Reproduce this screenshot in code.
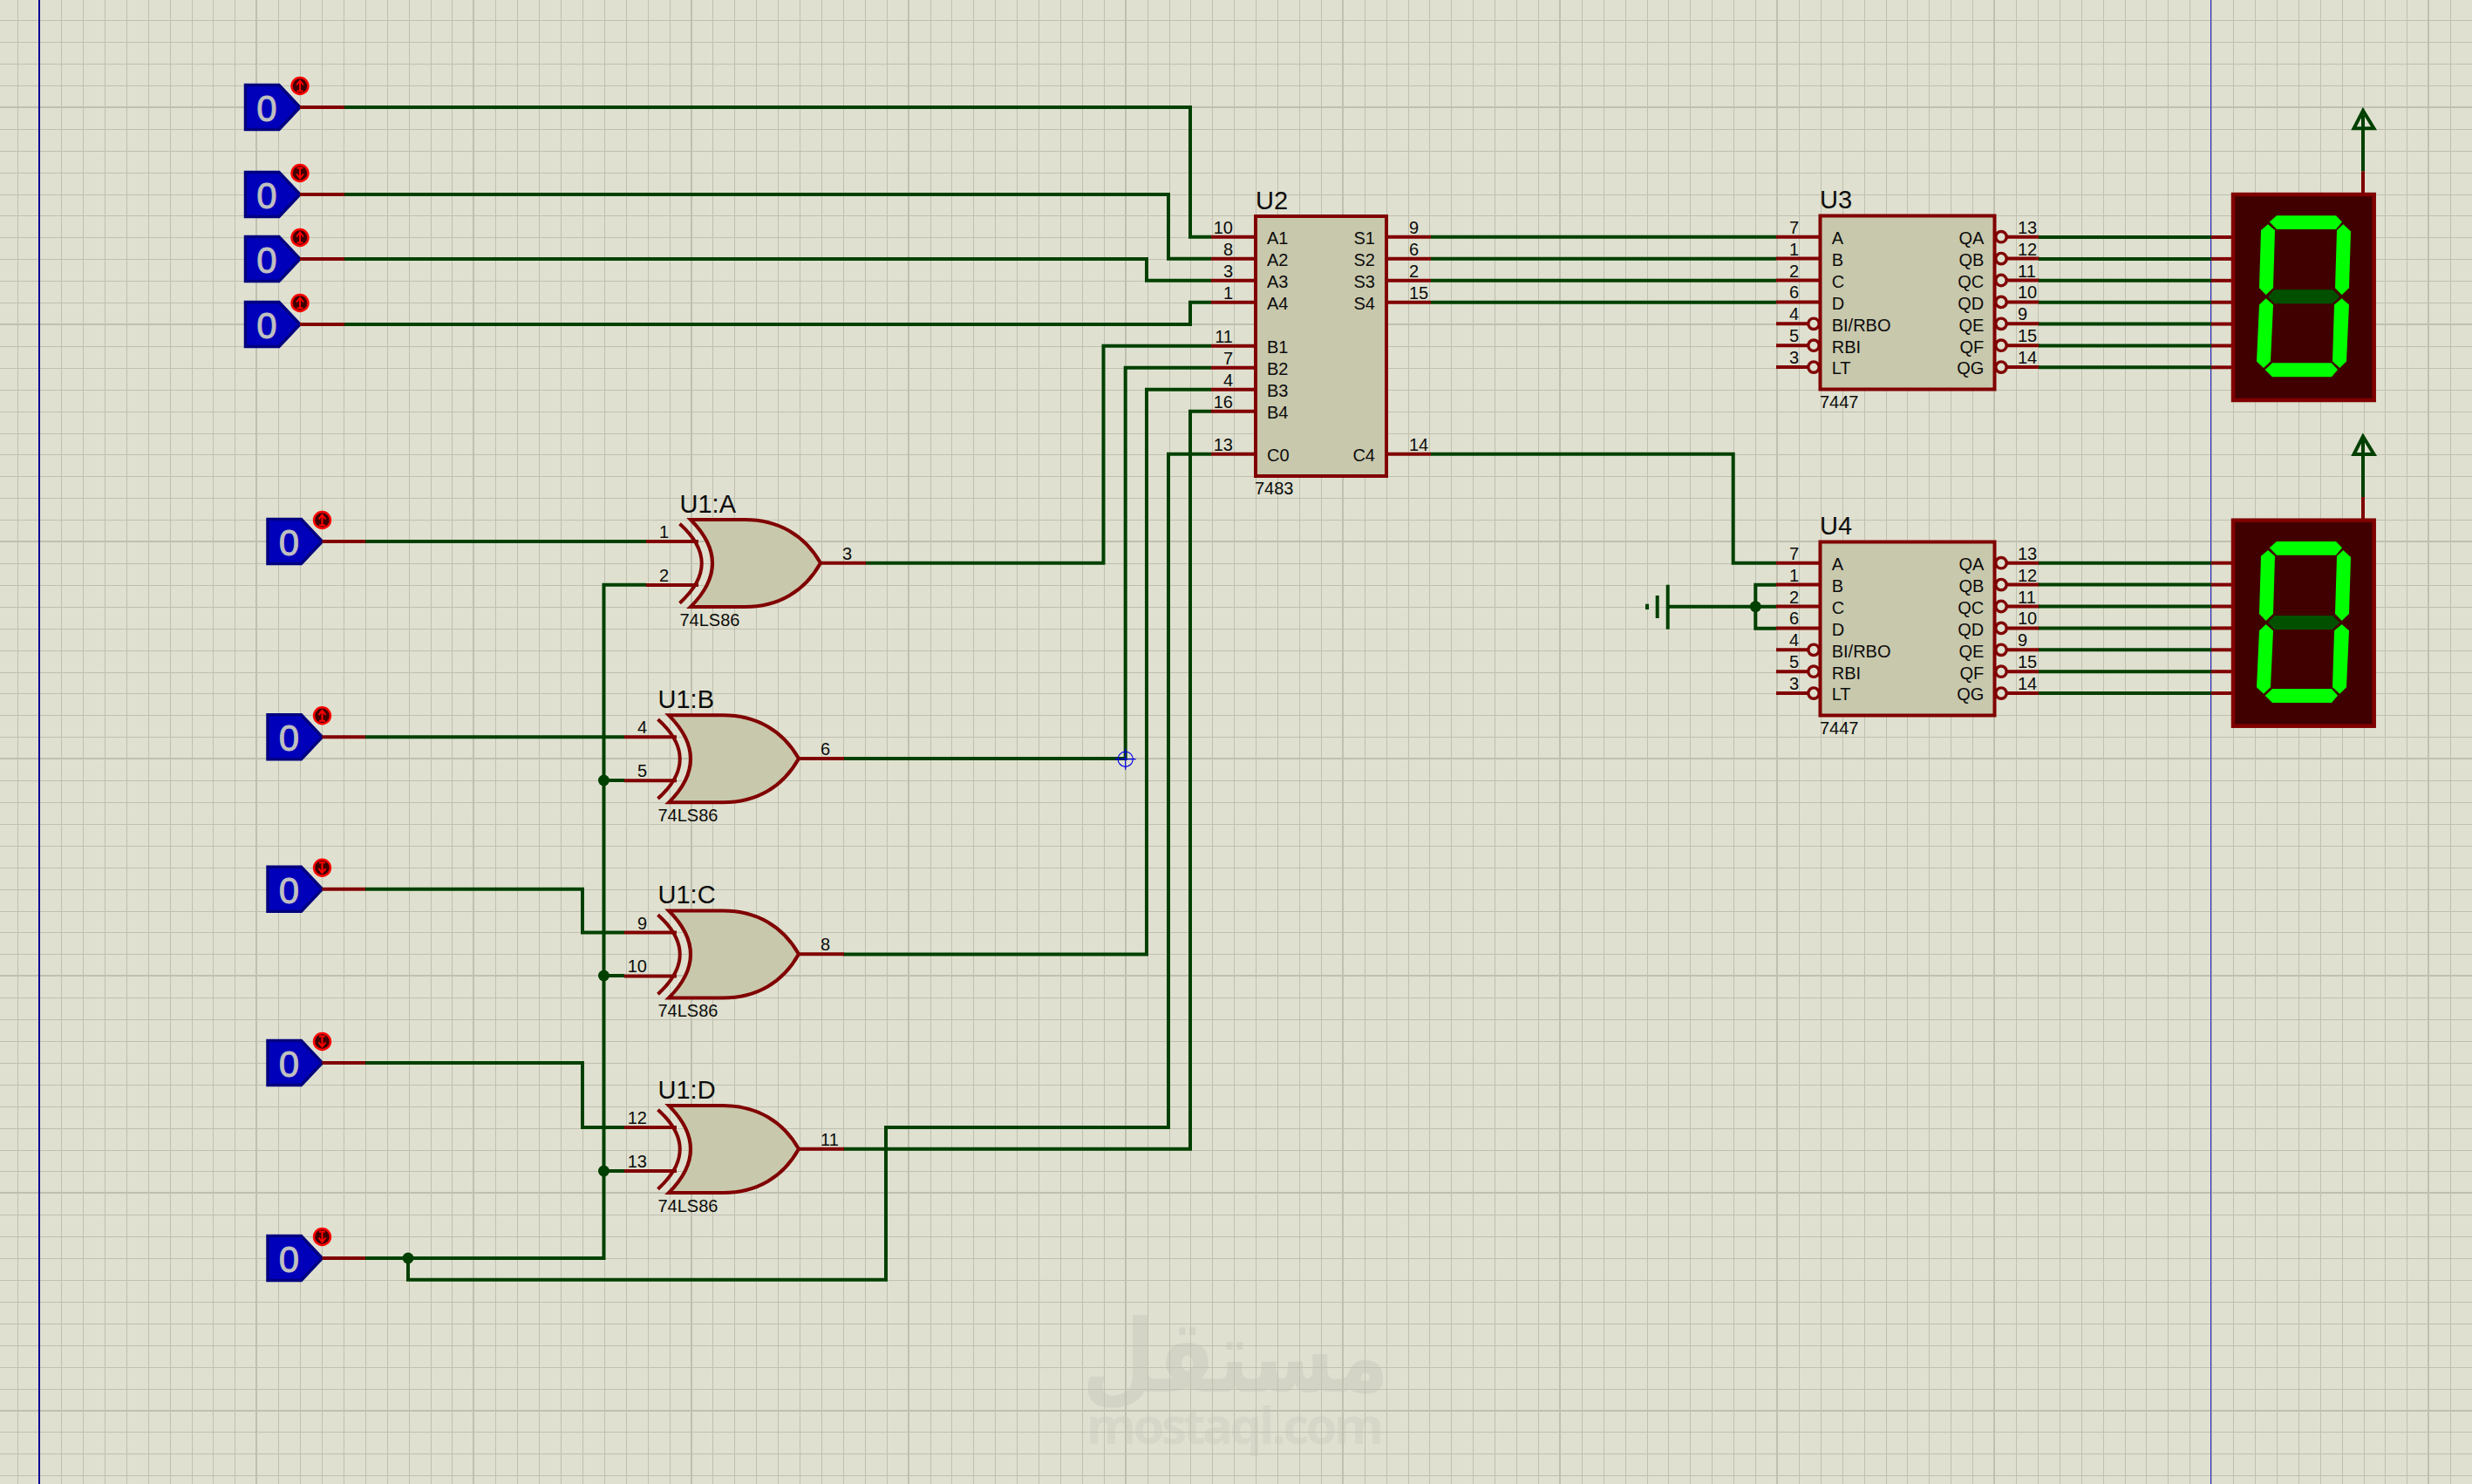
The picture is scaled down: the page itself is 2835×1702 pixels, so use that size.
import React from 'react';

const W = 2835;
const H = 1702;
const PITCH = 24.91;

const RED = '#800000';
const GREEN = '#004000';
const BODY = '#c8c8ac';

// grid of the schematic sheet, blue sheet border falls on a major line
const gridX = Array.from({ length: 116 }, (_, i) => i - 2);
const gridY = Array.from({ length: 72 }, (_, i) => i - 4);

const Wire: React.FC<{ d: string }> = ({ d }) => (
  <path d={d} fill="none" stroke={GREEN} strokeWidth={4} strokeLinejoin="miter" />
);

const Pin: React.FC<{ x1: number; x2: number; y: number }> = ({ x1, x2, y }) => (
  <line x1={x1} x2={x2} y1={y} y2={y} stroke={RED} strokeWidth={4} />
);

const Dot: React.FC<{ x: number; y: number }> = ({ x, y }) => <circle cx={x} cy={y} r={6.5} fill={GREEN} />;

const Label: React.FC<{ x: number; y: number; size?: number; end?: boolean; children: React.ReactNode }> = ({
  x,
  y,
  size = 20,
  end,
  children
}) => (
  <text x={x} y={y} fontSize={size} textAnchor={end ? 'end' : 'start'} fill="#0c0c0c">
    {children}
  </text>
);

// logic state input: blue tag with its little probe marker
const Terminal: React.FC<{ x: number; y: number; down?: boolean; stem?: number }> = ({ x, y, down, stem = 395 }) => (
  <g>
    <polygon
      points={`${x - 62.5},${y - 25.5} ${x - 24},${y - 25.5} ${x},${y} ${x - 24},${y + 25.5} ${x - 62.5},${y + 25.5}`}
      fill="#0000bb"
      stroke="#000080"
      strokeWidth={3.5}
    />
    <text x={x - 38} y={y + 16} fontSize={42} textAnchor="middle" fill="#c0c0c0" stroke="#c0c0c0" strokeWidth={0.9}>
      0
    </text>
    <Pin x1={x} x2={stem} y={y} />
    <circle cx={x} cy={y - 24.5} r={9.5} fill="#400000" stroke="#ff0000" strokeWidth={2.4} />
    <g transform={`translate(${x} ${y - 24.5}) scale(1 ${down ? -1 : 1})`}>
      <path d="M0 -5V6M-4 -1L0 -6L4 -1M-3.5 6H3.5" fill="none" stroke="#ff0000" strokeWidth={2} />
    </g>
  </g>
);

const XorGate: React.FC<{
  dx: number;
  dy: number;
  name: string;
  a: string;
  b: string;
  out: string;
  pinX: number;
}> = ({ dx, dy, name, a, b, out, pinX }) => {
  const numX = 767 + dx;
  return (
    <g>
      <Pin x1={pinX} x2={801 + dx} y={621 + dy} />
      <Pin x1={pinX} x2={801 + dx} y={671 + dy} />
      <Pin x1={941 + dx} x2={993 + dx} y={645.7 + dy} />
      <g transform={`translate(${dx} ${dy})`}>
        <path
          d="M792 596L854 596C893 596 923 614 941 645.7C923 678 893 696 854 696L792 696Q842 646 792 596Z"
          fill={BODY}
          stroke={RED}
          strokeWidth={4}
        />
        <path d="M779.5 600.7Q830 646 779.5 691.7" fill="none" stroke={RED} strokeWidth={4} />
      </g>
      <Label x={779.5 + dx} y={587.7 + dy} size={29}>
        {name}
      </Label>
      <Label x={779.5 + dx} y={717.7 + dy}>
        74LS86
      </Label>
      <Label x={numX} y={617 + dy} end>
        {a}
      </Label>
      <Label x={numX} y={666.7 + dy} end>
        {b}
      </Label>
      <Label x={966 + dx} y={641.7 + dy}>
        {out}
      </Label>
    </g>
  );
};

const U2_LEFT: [string, string, number][] = [
  ['A1', '10', 271.7],
  ['A2', '8', 296.7],
  ['A3', '3', 321.7],
  ['A4', '1', 346.7],
  ['B1', '11', 396.7],
  ['B2', '7', 421.7],
  ['B3', '4', 446.7],
  ['B4', '16', 471.7],
  ['C0', '13', 520.7]
];

const U2_RIGHT: [string, string, number][] = [
  ['S1', '9', 271.7],
  ['S2', '6', 296.7],
  ['S3', '2', 321.7],
  ['S4', '15', 346.7],
  ['C4', '14', 520.7]
];

const Adder: React.FC = () => (
  <g>
    {U2_LEFT.map(([name, num, y]) => (
      <g key={name}>
        <Pin x1={1389} x2={1440} y={y} />
        <Label x={1414} y={y - 4} end>
          {num}
        </Label>
      </g>
    ))}
    {U2_RIGHT.map(([name, num, y]) => (
      <g key={name}>
        <Pin x1={1590} x2={1641} y={y} />
        <Label x={1616} y={y - 4}>
          {num}
        </Label>
      </g>
    ))}
    <rect x={1440} y={248} width={150} height={298} fill={BODY} stroke={RED} strokeWidth={4} />
    {U2_LEFT.map(([name, , y]) => (
      <Label key={name} x={1453} y={y + 8.3}>
        {name}
      </Label>
    ))}
    {U2_RIGHT.map(([name, , y]) => (
      <Label key={name} x={1577} y={y + 8.3} end>
        {name}
      </Label>
    ))}
    <Label x={1440} y={239.5} size={29}>
      U2
    </Label>
    <Label x={1439} y={566.7}>
      7483
    </Label>
  </g>
);

const DEC_LEFT: [string, string][] = [
  ['A', '7'],
  ['B', '1'],
  ['C', '2'],
  ['D', '6'],
  ['BI/RBO', '4'],
  ['RBI', '5'],
  ['LT', '3']
];

const DEC_RIGHT: [string, string][] = [
  ['QA', '13'],
  ['QB', '12'],
  ['QC', '11'],
  ['QD', '10'],
  ['QE', '9'],
  ['QF', '15'],
  ['QG', '14']
];

const Decoder: React.FC<{ dy: number; name: string }> = ({ dy, name }) => (
  <g>
    {DEC_LEFT.map(([, num], i) => {
      const y = 271.7 + i * 24.9 + dy;
      return (
        <g key={num}>
          <Pin x1={2037} x2={i > 3 ? 2073 : 2088} y={y} />
          <Label x={2063} y={y - 4} end>
            {num}
          </Label>
        </g>
      );
    })}
    {DEC_RIGHT.map(([, num], i) => {
      const y = 271.7 + i * 24.9 + dy;
      return (
        <g key={num}>
          <Pin x1={2302} x2={2338.5} y={y} />
          <Label x={2314} y={y - 4}>
            {num}
          </Label>
        </g>
      );
    })}
    <rect x={2087.5} y={247.5 + dy} width={200} height={199} fill={BODY} stroke={RED} strokeWidth={4} />
    {DEC_LEFT.map(([label], i) => {
      const y = 271.7 + i * 24.9 + dy;
      return (
        <g key={label}>
          {i > 3 && <circle cx={2080} cy={y} r={6.2} fill="#dfe0cf" stroke={RED} strokeWidth={3.4} />}
          <Label x={2100.7} y={y + 8.3}>
            {label}
          </Label>
        </g>
      );
    })}
    {DEC_RIGHT.map(([label], i) => {
      const y = 271.7 + i * 24.9 + dy;
      return (
        <g key={label}>
          <circle cx={2295} cy={y} r={6.2} fill="#dfe0cf" stroke={RED} strokeWidth={3.4} />
          <Label x={2275.3} y={y + 8.3} end>
            {label}
          </Label>
        </g>
      );
    })}
    <Label x={2087} y={239 + dy} size={29}>
      {name}
    </Label>
    <Label x={2087} y={468 + dy}>
      7447
    </Label>
  </g>
);

// segment outlines, measured from the lower display
const SEG_ON = [
  '2602.7,628.3 2611,621 2679,621 2686,628.3 2679,636.7 2611,636.7',
  '2601,631 2609,637.7 2607,704 2598.7,712 2591,704 2593,637.7',
  '2687.3,631 2696,639 2694,704 2685.7,712 2678,704 2680,637.7',
  '2598.7,716 2607,723.3 2604,788.3 2596,795.7 2588,788.3 2591,723.3',
  '2685.7,716 2694,723.3 2691,788.3 2683.3,795.7 2675,788.3 2677,723.3',
  '2597.7,797.7 2606,790 2674,790 2681,797.7 2674,806 2606,806'
];

const Display: React.FC<{ dy: number }> = ({ dy }) => (
  <g transform={`translate(0 ${dy})`}>
    {[645.7, 670.6, 695.5, 720.4, 745.3, 770.2, 795].map(y => (
      <g key={y}>
        <line x1={2338} x2={2536} y1={y} y2={y} stroke={GREEN} strokeWidth={4} />
        <line x1={2536} x2={2561} y1={y} y2={y} stroke={RED} strokeWidth={4} />
      </g>
    ))}
    <rect x={2561} y={596.7} width={161.7} height={236} fill="#400000" stroke={RED} strokeWidth={4.5} />
    {SEG_ON.map(points => (
      <polygon key={points} points={points} fill="#00ff00" />
    ))}
    <polygon points="2601,714 2608.3,706 2675,706 2683.3,714 2675,722 2608.3,722" fill="#005000" />
    <line x1={2710} x2={2710} y1={596} y2={570} stroke={RED} strokeWidth={4} />
    <line x1={2710} x2={2710} y1={570} y2={505} stroke={GREEN} strokeWidth={4} />
    <polygon points="2710,500.5 2699.5,521 2722.5,521" fill="none" stroke={GREEN} strokeWidth={4} />
  </g>
);

export default function App() {
  return (
    <div className="relative w-[2835px] h-[1702px] overflow-hidden bg-[#dfe0cf] font-['Liberation_Sans',Arial,sans-serif]">
      <svg width={W} height={H} viewBox={`0 0 ${W} ${H}`} className="block">
        {/* watermark sits under the sheet grid */}
        <text
          transform="translate(1417 1596) scale(0.83 1)"
          fontSize={116}
          fontWeight={700}
          textAnchor="middle"
          direction="rtl"
          fill="#d3d4c6"
          className="font-['DejaVu_Sans',sans-serif]"
        >
          مستقل
        </text>
        <text
          x={1246}
          y={1656}
          fontSize={58}
          fontWeight={700}
          textLength={341}
          lengthAdjust="spacing"
          fill="#d6d7c8"
          className="font-['Open_Sans',sans-serif]"
        >
          mostaql.com
        </text>

        <g shapeRendering="crispEdges" fill="#bfc0af">
          {gridX.map(k => (
            <rect
              key={k}
              x={Math.round(45.2 + k * PITCH) - (k % 10 === 0 ? 1 : 0)}
              y={0}
              width={k % 10 === 0 ? 2 : 1}
              height={H}
            />
          ))}
          {gridY.map(k => (
            <rect
              key={k}
              x={0}
              y={Math.round(122.9 + k * PITCH) - (k % 10 === 0 ? 1 : 0)}
              width={W}
              height={k % 10 === 0 ? 2 : 1}
            />
          ))}
        </g>

        {/* sheet border */}
        <rect x={44} y={0} width={2} height={H} fill="#000090" shapeRendering="crispEdges" />
        <rect x={2535} y={0} width={1} height={H} fill="#2020c8" shapeRendering="crispEdges" />

        {/* input wires */}
        <Wire d="M395 123H1365V271.7H1389" />
        <Wire d="M395 223H1340V296.7H1389" />
        <Wire d="M395 297H1315V321.7H1389" />
        <Wire d="M395 372H1365V346.7H1389" />
        <Wire d="M419 621H741" />
        <Wire d="M419 845.3H716" />
        <Wire d="M419 1019.7H668V1069.5H716" />
        <Wire d="M419 1219H668V1293H716" />
        <Wire d="M741 670.7H692.5V1443H419" />
        <Wire d="M692.5 895H716" />
        <Wire d="M692.5 1119H716" />
        <Wire d="M692.5 1343H716" />

        {/* gate outputs into the adder */}
        <Wire d="M993 645.7H1265.5V396.7H1389" />
        <Wire d="M967 870H1290.7V421.7H1389" />
        <Wire d="M967 1094.5H1315V446.7H1389" />
        <Wire d="M967 1317.7H1365V471.7H1389" />
        <Wire d="M1389 520.7H1340V1293H1016V1467.7H468V1443" />

        {/* adder to decoders */}
        <Wire d="M1641 271.7H2037" />
        <Wire d="M1641 296.7H2037" />
        <Wire d="M1641 321.7H2037" />
        <Wire d="M1641 346.7H2037" />
        <Wire d="M1641 520.7H1987.7V645.7H2037" />

        {/* ground */}
        <Wire d="M1912.7 695.7H2037" />
        <Wire d="M2037 670.7H2013.3V720.7H2037" />
        <Wire d="M1912.7 670.7V721.7" />
        <Wire d="M1900.7 683V709" />
        <Wire d="M1889 692.7V699" />
        <Dot x={2013.3} y={695.7} />

        <Dot x={692.5} y={895} />
        <Dot x={692.5} y={1119} />
        <Dot x={692.5} y={1343} />
        <Dot x={468} y={1443} />

        {/* probe cursor */}
        <g fill="none" stroke="#0000e0" strokeWidth={1.2}>
          <circle cx={1290.7} cy={870.7} r={8.6} />
          <path d="M1278.7 870.7H1302.7M1290.7 858.7V882.7" />
        </g>

        <Terminal x={344} y={123} />
        <Terminal x={344} y={223} down />
        <Terminal x={344} y={297} />
        <Terminal x={344} y={372} />
        <Terminal x={369.5} y={621} stem={419} />
        <Terminal x={369.5} y={845.3} stem={419} />
        <Terminal x={369.5} y={1019.7} stem={419} down />
        <Terminal x={369.5} y={1219} stem={419} down />
        <Terminal x={369.5} y={1443} stem={419} down />

        <XorGate dx={0} dy={0} name="U1:A" a="1" b="2" out="3" pinX={741} />
        <XorGate dx={-25} dy={224.3} name="U1:B" a="4" b="5" out="6" pinX={716} />
        <XorGate dx={-25} dy={448.5} name="U1:C" a="9" b="10" out="8" pinX={716} />
        <XorGate dx={-25} dy={672} name="U1:D" a="12" b="13" out="11" pinX={716} />

        <Adder />
        <Decoder dy={0} name="U3" />
        <Decoder dy={374} name="U4" />
        <Display dy={-373.7} />
        <Display dy={0} />
      </svg>
    </div>
  );
}
